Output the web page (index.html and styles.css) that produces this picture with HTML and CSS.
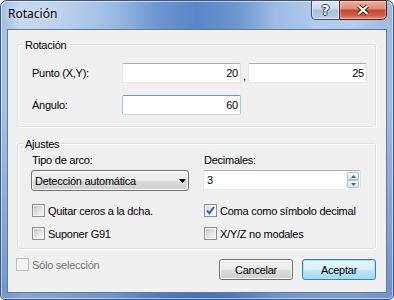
FILE: index.html
```html
<!DOCTYPE html>
<html lang="es">
<head>
  <meta charset="UTF-8">
  <meta name="viewport" content="width=device-width, initial-scale=1.0">
  <title>Rotación</title>
  <link rel="stylesheet" href="styles.css">
</head>
<body>

  <div class="window">
    <div class="titlebar">
      <span class="title">Rotación</span>
      <div class="caption-buttons">
        <div class="cap help">?</div>
        <div class="cap close">
          <svg width="14" height="12" viewBox="0 0 14 12">
            <path d="M2.5 2 L11.5 10 M11.5 2 L2.5 10" stroke="#3b1a14" stroke-width="4.2" fill="none"/>
            <path d="M2.5 2 L11.5 10 M11.5 2 L2.5 10" stroke="#fff" stroke-width="2.2" fill="none"/>
          </svg>
        </div>
      </div>
    </div>

    <div class="client">
      <div class="group rotacion">
        <span class="legend">Rotación</span>
        <div class="field-row">
          <span class="field-label">Punto (X,Y):</span>
          <input class="edit" type="text" value="20">
          <span class="comma">,</span>
          <input class="edit" type="text" value="25">
        </div>
        <div class="field-row">
          <span class="field-label">Ángulo:</span>
          <input class="edit focus" type="text" value="60">
        </div>
      </div>

      <div class="group ajustes">
        <span class="legend">Ajustes</span>
        <div class="settings">
          <div class="col col-left">
            <span class="caption">Tipo de arco:</span>
            <div class="combo">
              <span>Detección automática</span>
              <svg width="7" height="4" viewBox="0 0 7 4"><path d="M0 0 H7 L3.5 4 Z" fill="#000"/></svg>
            </div>
            <label class="check first"><span class="box"></span>Quitar ceros a la dcha.</label>
            <label class="check"><span class="box"></span>Suponer G91</label>
          </div>
          <div class="col col-right">
            <span class="caption">Decimales:</span>
            <div class="spin">
              <span class="spin-value">3</span>
              <div class="spin-btns">
                <span class="spin-btn"><svg width="5" height="3" viewBox="0 0 5 3"><path d="M0 3 L2.5 0 L5 3 Z" fill="#4d6185"/></svg></span>
                <span class="spin-btn"><svg width="5" height="3" viewBox="0 0 5 3"><path d="M0 0 L5 0 L2.5 3 Z" fill="#4d6185"/></svg></span>
              </div>
            </div>
            <label class="check first">
              <span class="box checked">
                <svg width="9" height="9" viewBox="0 0 9 9"><path d="M1 4.5 L3.3 7.3 L8 1" stroke="#3a5ea6" stroke-width="2" fill="none"/></svg>
              </span>Coma como símbolo decimal
            </label>
            <label class="check"><span class="box"></span>X/Y/Z no modales</label>
          </div>
        </div>
      </div>

      <div class="footer">
        <label class="check disabled"><span class="box"></span>Sólo selección</label>
        <div class="buttons">
          <button class="btn">Cancelar</button>
          <button class="btn default">Aceptar</button>
        </div>
      </div>
    </div>
  </div>

</body>
</html>
```

FILE: styles.css
```css
* {
  box-sizing: border-box;
}

body {
  margin: 0;
  background: #fff;
  font-family: "Liberation Sans", Arial, sans-serif;
  font-size: 11px;
  letter-spacing: -0.25px;
  color: #000;
}

.window {
  width: 394px;
  height: 300px;
  display: flex;
  flex-direction: column;
  padding: 0 6px 6px 6px;
  border: 1px solid #3a5783;
  border-radius: 7px 7px 5px 5px;
  background:
    linear-gradient(to bottom, rgba(255, 255, 255, 0) 0%, rgba(255, 255, 255, 0) 35%, rgba(35, 85, 165, 0.4) 100%),
    linear-gradient(to right, #9fbce2 0%, #c6d8ef 5%, #bfd3ec 14%, #9ebde4 28%, #6d96cf 40%, #5886c7 50%, #6c95ce 60%, #9dbbe4 70%, #b2c9ea 80%, #b6cdeb 90%, #9cb9e1 100%);
  box-shadow: inset 0 0 0 1px rgba(255, 255, 255, 0.55);
}

/* title bar */

.titlebar {
  height: 28px;
  flex-shrink: 0;
  display: flex;
  justify-content: space-between;
  align-items: flex-start;
}

.title {
  padding: 5px 0 0 1px;
  font-family: "Noto Sans", "Open Sans", sans-serif;
  font-size: 12px;
  line-height: 16px;
  letter-spacing: 0;
  text-shadow: 0 0 6px rgba(255, 255, 255, 0.9);
}

.caption-buttons {
  display: flex;
  margin-top: -1px;
}

.cap {
  height: 20px;
  display: flex;
  align-items: center;
  justify-content: center;
  border: 1px solid #3b4f70;
}

.help {
  width: 28px;
  border-right: none;
  border-radius: 0 0 0 5px;
  background: linear-gradient(#e0e9f4 0%, #c9d8eb 45%, #a9bfdc 50%, #b8cce5 100%);
  box-shadow: inset 0 0 0 1px rgba(255, 255, 255, 0.5);
  color: #fff;
  font-family: "DejaVu Sans", sans-serif;
  font-weight: bold;
  font-size: 14px;
  letter-spacing: 0;
  text-shadow: 1px 0 #2c3f5e, -1px 0 #2c3f5e, 0 1px #2c3f5e, 0 -1px #2c3f5e;
}

.close {
  width: 48px;
  border-color: #4a2620;
  border-radius: 0 0 5px 0;
  background: linear-gradient(#eab0a2 0%, #df8b78 45%, #c8442d 50%, #cf5b42 80%, #e3967c 100%);
  box-shadow: inset 0 0 0 1px rgba(255, 255, 255, 0.35);
}

/* client area */

.client {
  flex: 1;
  display: flex;
  flex-direction: column;
  padding: 14px 10px 0 9px;
  background: #f0f0f0;
  border: 1px solid #5f7aa1;
}

.group {
  position: relative;
  border: 1px solid #d5dfe5;
  border-radius: 3px;
  box-shadow: inset 1px 1px 0 #fff, 1px 1px 0 #fff;
}

.legend {
  position: absolute;
  top: -6px;
  left: 5px;
  padding: 0 2px;
  line-height: 13px;
  background: #f0f0f0;
}

.rotacion {
  display: flex;
  flex-direction: column;
  gap: 12px;
  padding: 18px 0 11px 14px;
}

.field-row {
  display: flex;
  align-items: center;
  height: 20px;
}

.field-label {
  width: 90px;
}

.edit {
  width: 119px;
  height: 20px;
  padding: 0 2px;
  font: inherit;
  letter-spacing: inherit;
  text-align: right;
  color: #000;
  background: #fff;
  border: 1px solid;
  border-color: #abadb3 #dbdfe6 #e3e9ef #e2e3ea;
  border-radius: 2px;
  outline: none;
}

.edit.focus {
  border-color: #5b9ad6 #9fc6e8 #b7d9ed #9fc6e8;
}

.comma {
  width: 7px;
  align-self: flex-end;
  line-height: 13px;
  text-align: center;
}

.ajustes {
  margin-top: 16px;
  padding: 10px 0 8px 14px;
}

.settings {
  display: flex;
}

.col {
  display: flex;
  flex-direction: column;
}

.col-left {
  width: 172px;
}

.caption {
  line-height: 13px;
}

.combo {
  width: 158px;
  height: 21px;
  margin: 3px 0 0 -1px;
  padding: 0 2px 0 3px;
  display: flex;
  align-items: center;
  justify-content: space-between;
  border: 1px solid #707070;
  border-radius: 3px;
  background: linear-gradient(#f2f2f2 0%, #ebebeb 50%, #dddddd 51%, #cfcfcf 100%);
  box-shadow: inset 0 0 0 1px #fcfcfc;
}

.spin {
  width: 158px;
  height: 20px;
  margin: 3px 0 0 -1px;
  padding: 0 1px 0 3px;
  display: flex;
  align-items: center;
  justify-content: space-between;
  background: #fff;
  border: 1px solid;
  border-color: #abadb3 #dbdfe6 #e3e9ef #e2e3ea;
  border-radius: 2px;
}

.spin-btns {
  display: flex;
  flex-direction: column;
  width: 12px;
  height: 16px;
}

.spin-btn {
  flex: 1;
  display: flex;
  align-items: center;
  justify-content: center;
  border: 1px solid #b3bdcb;
  border-radius: 1px;
  background: linear-gradient(#f5f8fb, #dde5ef);
}

.check {
  display: flex;
  align-items: center;
  gap: 3px;
  height: 13px;
  margin-top: 10px;
}

.check.first {
  margin-top: 13px;
}

.col-right .check.first {
  margin-top: 14px;
}

.box {
  width: 13px;
  height: 13px;
  flex-shrink: 0;
  display: flex;
  align-items: center;
  justify-content: center;
  border: 1px solid #8e8f8f;
  background: linear-gradient(135deg, #b9bec5 0%, #e4e6e9 55%, #f6f6f6 100%);
  box-shadow: inset 0 0 0 1px #f4f4f4;
}

.box.checked {
  background: linear-gradient(135deg, #d6dbe1 0%, #eef0f2 55%, #fafafa 100%);
}

/* footer */

.footer {
  display: flex;
  justify-content: space-between;
  align-items: flex-start;
  margin-top: 10px;
}

.footer .check {
  margin: -1px 0 0 -1px;
  color: #737373;
}

.check.disabled .box {
  border-color: #bcbcbc;
  background: #f4f4f4;
  box-shadow: none;
}

.buttons {
  display: flex;
  gap: 9px;
}

.btn {
  width: 74px;
  height: 21px;
  padding: 0;
  font: inherit;
  letter-spacing: inherit;
  color: #000;
  border: 1px solid #707070;
  border-radius: 3px;
  background: linear-gradient(#f2f2f2 0%, #ebebeb 50%, #dddddd 51%, #cfcfcf 100%);
  box-shadow: inset 0 0 0 1px #fbfbfb;
}

.btn.default {
  border-color: #3c7fb1;
  background: linear-gradient(#eaf6fd 0%, #d9f0fc 50%, #bee6fd 51%, #a7d9f5 100%);
  box-shadow: inset 0 0 0 1px #9fe3fb;
}
```
